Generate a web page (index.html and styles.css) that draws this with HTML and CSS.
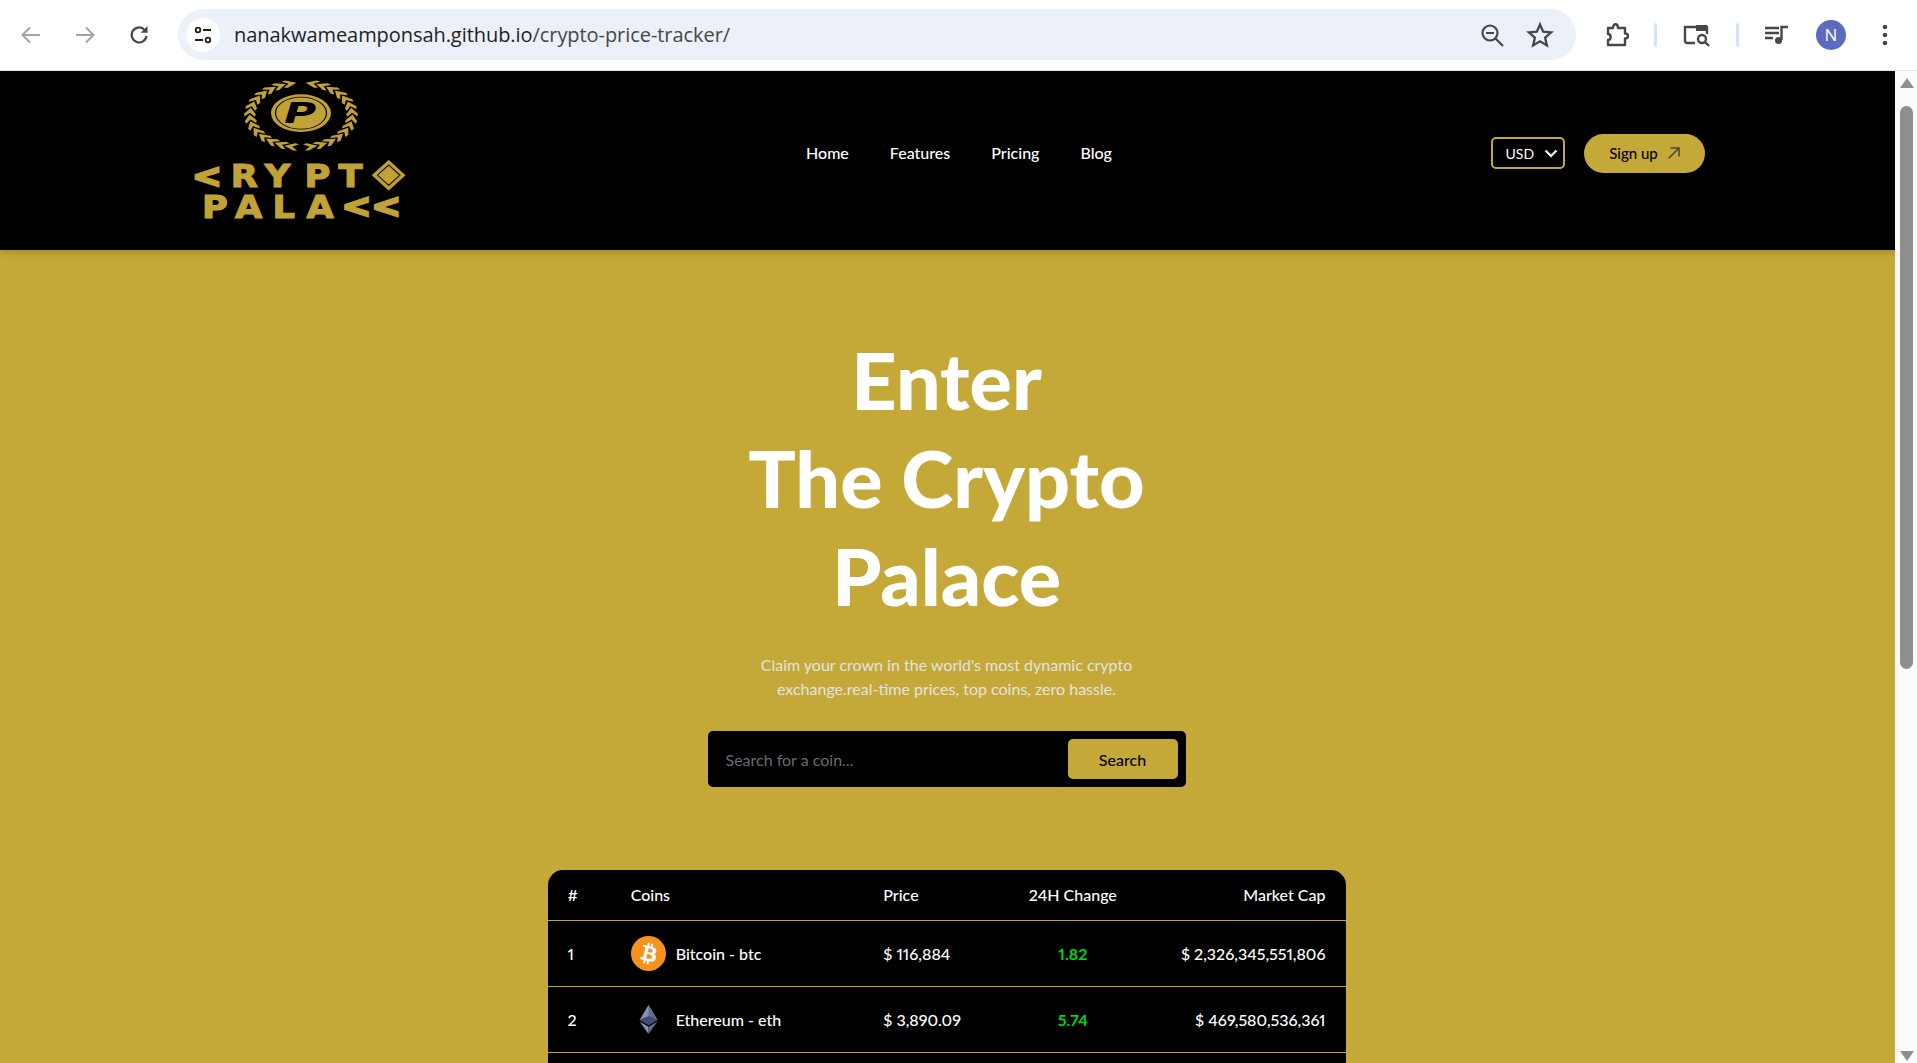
FILE: index.html
```html
<!DOCTYPE html>
<html lang="en">
<head>
<meta charset="UTF-8" />
<meta name="viewport" content="width=device-width, initial-scale=1" />
<title>Crypto Palace</title>
<link rel="stylesheet" href="styles.css">
</head>
<body>

<!-- browser toolbar -->
<header class="toolbar">
  <div class="tool-btn">
    <svg width="24" height="24" viewBox="0 0 24 24" fill="none" stroke="#a3a3a3" stroke-width="2"><path d="M21 12H4M11 4.500 3.500 12l7.500 7.500"/></svg>
  </div>
  <div class="tool-btn">
    <svg width="24" height="24" viewBox="0 0 24 24" fill="none" stroke="#a3a3a3" stroke-width="2"><path d="M3 12h17M13 4.500l7.500 7.500-7.500 7.500"/></svg>
  </div>
  <div class="tool-btn">
    <svg width="24" height="24" viewBox="0 0 24 24" fill="none" stroke="#474747" stroke-width="2.200"><path d="M19.500 13a7.500 7.500 0 1 1-2.300-6.500L20 9"/><path d="M20.500 3v6.800h-6.800" stroke="none" fill="#474747"/></svg>
  </div>

  <div class="address-bar">
    <span class="site-icon">
      <svg width="20" height="20" viewBox="0 0 20 20" fill="none" stroke="#1f1f1f" stroke-width="1.800"><circle cx="5" cy="5" r="2.300"/><path d="M10 5h8M2 15h8"/><circle cx="15" cy="15" r="2.300"/></svg>
    </span>
    <span class="url"><span class="url-host">nanakwameamponsah.github.io</span>/crypto-price-tracker/</span>
    <svg class="bar-icon" width="28" height="28" viewBox="0 0 28 28" fill="none" stroke="#474747" stroke-width="2.200"><circle cx="12" cy="12" r="7.500"/><path d="M8 12h8M17.500 17.500l7.500 7.500"/></svg>
    <svg class="bar-icon" width="28" height="28" viewBox="0 0 24 24" fill="none" stroke="#474747" stroke-width="2"><path d="m12 3 2.700 6.200 6.800.600-5.100 4.500 1.500 6.600L12 17.400l-5.900 3.500 1.500-6.600-5.100-4.500 6.800-.600z"/></svg>
  </div>

  <div class="tool-box w40">
    <svg width="26" height="26" viewBox="0 0 26 26" fill="none" stroke="#474747" stroke-width="2.400"><path d="M4 6h5c0-5 5-5 5 0h7v5.500c4 0 4 5 0 5V23H4v-5c3.500 0 3.500-6 0-6z" stroke-linejoin="round"/></svg>
  </div>
  <div class="tool-box w36"><span class="tool-sep"></span></div>
  <div class="tool-box w48">
    <svg width="28" height="26" viewBox="0 0 28 26" fill="none" stroke="#474747" stroke-width="2.400"><path d="M12 21H4a2 2 0 0 1-2-2V5h22v7"/><path d="M13 3h11v6H13z" fill="#474747" stroke="none"/><circle cx="19" cy="17" r="4"/><path d="m22 20 4 4"/></svg>
  </div>
  <div class="tool-box w32"><span class="tool-sep"></span></div>
  <div class="tool-box w48">
    <svg width="26" height="24" viewBox="0 0 26 24" fill="none" stroke="#474747" stroke-width="2.400"><path d="M1 5h14M1 10h14M1 15h8"/><path d="M17.500 17V4H24"/><circle cx="14.500" cy="17.500" r="3.500" fill="#474747" stroke="none"/></svg>
  </div>
  <div class="tool-box w60"><span class="avatar">N</span></div>
  <div class="tool-box w48">
    <svg width="8" height="24" viewBox="0 0 8 24" fill="#474747"><circle cx="4" cy="4" r="2.300"/><circle cx="4" cy="12" r="2.300"/><circle cx="4" cy="20" r="2.300"/></svg>
  </div>
</header>

<div class="viewport">
  <main class="page">

    <nav class="navbar">
      <a class="logo" href="#" aria-label="Crypto Palace">
        <svg width="225" height="150" viewBox="0 0 225 150">
          <defs>
            <path id="leaf" d="M-7-51 3-57l4 1-6 5 6 5-4 1z"/>
            <g id="branch">
              <use href="#leaf" transform="rotate(13)"/>
              <use href="#leaf" transform="rotate(25)"/>
              <use href="#leaf" transform="rotate(37)"/>
              <use href="#leaf" transform="rotate(49)"/>
              <use href="#leaf" transform="rotate(61)"/>
              <use href="#leaf" transform="rotate(73)"/>
              <use href="#leaf" transform="rotate(85)"/>
              <use href="#leaf" transform="rotate(97)"/>
              <use href="#leaf" transform="rotate(109)"/>
              <use href="#leaf" transform="rotate(121)"/>
              <use href="#leaf" transform="rotate(133)"/>
              <use href="#leaf" transform="rotate(145)"/>
              <use href="#leaf" transform="rotate(157)"/>
              <use href="#leaf" transform="rotate(169)"/>
            </g>
          </defs>
          <g fill="#c0a236" transform="translate(111 40) scale(1 .63)">
            <use href="#branch"/>
            <use href="#branch" transform="scale(-1 1)"/>
            <g transform="translate(0 -3)">
              <circle r="30"/>
              <circle r="25.500" fill="none" stroke="#000" stroke-width="1.200"/>
              <text class="logo-coin" x="-1" y="16" text-anchor="middle">P</text>
            </g>
          </g>
          <text class="logo-word" transform="scale(1.1 1)" y="112"><tspan class="logo-chev" x="2">&lt;</tspan><tspan x="37 68 104 135">RYPT</tspan><tspan class="logo-dia" x="166" dy="-2">◈</tspan></text>
          <text class="logo-word" transform="scale(1.1 1)" y="143"><tspan x="11 41 75 106">PALA</tspan><tspan class="logo-chev" x="138 165" dy="-1">&lt;&lt;</tspan></text>
        </svg>
      </a>

      <ul class="nav-links">
        <li>Home</li>
        <li>Features</li>
        <li>Pricing</li>
        <li>Blog</li>
      </ul>

      <div class="nav-right">
        <div class="currency">
          USD
          <svg width="14" height="9" viewBox="0 0 14 9" fill="none" stroke="#fff" stroke-width="2.200"><path d="m1.500 1.500 5.500 5.500 5.500-5.500"/></svg>
        </div>
        <button class="signup">
          Sign up
          <svg width="14" height="14" viewBox="0 0 14 14" fill="none" stroke="#4a4a3a" stroke-width="1.600"><path d="M1.500 12.500 12 2M3.500 2H12v8.500"/></svg>
        </button>
      </div>
    </nav>

    <div class="content">
      <section class="hero">
        <h1>Enter<br>The Crypto<br>Palace</h1>
        <p>Claim your crown in the world's most dynamic crypto<br>exchange.real-time prices, top coins, zero hassle.</p>
        <form class="search-form">
          <input type="text" placeholder="Search for a coin...">
          <button type="button">Search</button>
        </form>
      </section>

      <section class="crypto-table">
        <div class="table-row head">
          <span>#</span>
          <span>Coins</span>
          <span>Price</span>
          <span class="center">24H Change</span>
          <span class="right">Market Cap</span>
        </div>
        <div class="table-row">
          <span>1</span>
          <span class="coin">
            <svg width="35" height="35" viewBox="0 0 32 32"><circle cx="16" cy="16" r="16" fill="#f7931a"/><path fill="#fff" d="M23.189 14.020c.314-2.096-1.283-3.223-3.465-3.975l.708-2.840-1.728-.430-.690 2.765c-.454-.114-.920-.220-1.385-.326l.695-2.783L15.596 6l-.708 2.839c-.376-.086-.746-.170-1.104-.260l.002-.009-2.384-.595-.460 1.846s1.283.294 1.256.312c.700.175.826.638.805 1.006l-.806 3.235c.048.012.110.030.180.057l-.183-.045-1.130 4.532c-.086.212-.303.531-.793.410.018.025-1.256-.313-1.256-.313l-.858 1.978 2.250.561c.418.105.828.215 1.231.318l-.715 2.872 1.727.430.708-2.840c.472.127.930.245 1.378.357l-.706 2.828 1.728.430.715-2.866c2.948.558 5.164.333 6.097-2.333.752-2.146-.037-3.385-1.588-4.192 1.130-.260 1.980-1.003 2.207-2.538zm-3.950 5.538c-.533 2.147-4.148.986-5.320.695l.950-3.805c1.172.293 4.929.872 4.370 3.110zm.535-5.569c-.487 1.953-3.495.960-4.470.717l.860-3.450c.975.243 4.118.696 3.610 2.733z"/></svg>
            Bitcoin - btc
          </span>
          <span>$ 116,884</span>
          <span class="center green">1.82</span>
          <span class="right">$ 2,326,345,551,806</span>
        </div>
        <div class="table-row">
          <span>2</span>
          <span class="coin">
            <svg width="35" height="35" viewBox="0 0 35 35">
              <path fill="#8a92b2" d="M17.500 3 8.600 17.800l8.900 5.300 8.900-5.300z"/>
              <path fill="#62688f" d="M17.500 3v20.100l8.900-5.300z"/>
              <path fill="#454a75" d="M17.500 14 8.600 17.800l8.900 5.300 8.900-5.300z"/>
              <path fill="#8a92b2" d="m8.600 19.500 8.900 12.500v-7.200z"/>
              <path fill="#62688f" d="m26.400 19.500-8.900 12.500v-7.200z"/>
            </svg>
            Ethereum - eth
          </span>
          <span>$ 3,890.09</span>
          <span class="center green">5.74</span>
          <span class="right">$ 469,580,536,361</span>
        </div>
      </section>
    </div>

  </main>

  <!-- window scrollbar -->
  <aside class="scrollbar">
    <span class="arrow-up"></span>
    <span class="thumb"></span>
    <span class="arrow-down"></span>
  </aside>
</div>

</body>
</html>
```

FILE: styles.css
```css
* {
  box-sizing: border-box;
}
html, body {
  margin: 0;
  height: 100%;
  overflow: hidden;
}
body {
  font-family: 'Lato', sans-serif;
  background: #fff;
  display: flex;
  flex-direction: column;
}

/* browser toolbar */
.toolbar {
  height: 71px;
  flex: none;
  display: flex;
  align-items: center;
  padding: 0 8px 1px 4px;
  background: #fff;
  border-bottom: 1px solid #e3e3e3;
}
.tool-btn {
  width: 54px;
  display: flex;
  justify-content: center;
}
.address-bar {
  width: 1398px;
  height: 51px;
  margin-left: 12px;
  margin-right: 21px;
  padding: 0 22px 0 8px;
  background: #ebf0f9;
  border-radius: 26px;
  display: flex;
  align-items: center;
}
.site-icon {
  width: 34px;
  height: 34px;
  border-radius: 50%;
  background: #fff;
  display: flex;
  align-items: center;
  justify-content: center;
  margin-right: 14px;
}
.url {
  flex: 1;
  font-family: 'Open Sans', sans-serif;
  font-size: 20px;
  letter-spacing: -0.06px;
  color: #474747;
}
.url-host {
  color: #1f1f1f;
}
.bar-icon {
  margin-left: 20px;
}
.tool-box {
  display: flex;
  align-items: center;
  justify-content: center;
}
.w32 { width: 32px; }
.w36 { width: 36px; }
.w40 { width: 40px; }
.w48 { width: 48px; }
.w60 { width: 60px; }
.tool-sep {
  width: 3px;
  height: 24px;
  background: #d3e3fd;
  border-radius: 2px;
}
.avatar {
  width: 30px;
  height: 30px;
  border-radius: 50%;
  background: #5c6bc0;
  color: #fff;
  font-family: 'Open Sans', sans-serif;
  font-size: 17px;
  display: flex;
  align-items: center;
  justify-content: center;
}

/* page area */
.viewport {
  flex: 1;
  display: flex;
  min-height: 0;
}
.page {
  flex: 1;
  min-width: 0;
  overflow: hidden;
  background: #c4a938;
  color: #fff;
}
.content {
  padding-right: 2px;
}
.scrollbar {
  width: 22px;
  flex: none;
  background: #fbfbfb;
  position: relative;
}
.thumb {
  position: absolute;
  top: 35px;
  left: 5px;
  width: 13px;
  height: 563px;
  background: #8f8f8f;
  border-radius: 7px;
}
.arrow-up, .arrow-down {
  position: absolute;
  left: 5px;
  width: 0;
  height: 0;
  border-left: 7px solid transparent;
  border-right: 7px solid transparent;
}
.arrow-up {
  top: 7px;
  border-bottom: 10px solid #8f8f8f;
}
.arrow-down {
  bottom: 2px;
  border-top: 10px solid #8f8f8f;
}

/* navbar */
.navbar {
  height: 179px;
  padding: 0 10%;
  background: #000;
  display: flex;
  align-items: center;
  justify-content: space-between;
  box-shadow: 0 3px 6px rgba(0, 0, 0, 0.15);
}
.logo {
  width: 237px;
  display: block;
  align-self: flex-start;
  margin-top: 4px;
}
.logo svg {
  display: block;
}
.logo-coin {
  font-family: 'DejaVu Sans', sans-serif;
  font-weight: 700;
  font-style: italic;
  font-size: 44px;
  fill: #000;
}
.logo-word {
  font-family: 'DejaVu Sans', sans-serif;
  font-weight: 700;
  font-size: 32px;
  fill: #c0a236;
  stroke: #c0a236;
  stroke-width: 1.200;
}
.logo-chev {
  font-size: 32px;
  stroke-width: 2.500;
}
.logo-dia {
  font-size: 38px;
  stroke-width: 1;
}
.nav-links {
  display: flex;
  gap: 41px;
  list-style: none;
  margin: -16px 0 0;
  padding: 0;
  font-size: 16px;
  font-weight: 500;
}
.nav-right {
  display: flex;
  align-items: center;
  gap: 19px;
  margin-top: -15px;
}
.currency {
  width: 74px;
  height: 32px;
  border: 2px solid #c4a938;
  border-radius: 5px;
  display: flex;
  align-items: center;
  justify-content: space-between;
  padding: 0 5px 0 12px;
  font-size: 14px;
}
.signup {
  width: 121px;
  height: 39px;
  border: none;
  border-radius: 20px;
  background: #c4a938;
  color: #000;
  font-family: inherit;
  font-size: 15px;
  font-weight: 500;
  display: flex;
  align-items: center;
  justify-content: center;
  gap: 9px;
}

/* hero */
.hero {
  padding-top: 81px;
  display: flex;
  flex-direction: column;
  align-items: center;
  text-align: center;
}
.hero h1 {
  margin: 0;
  font-size: 79px;
  font-weight: 900;
  line-height: 98px;
}
.hero p {
  margin: 28px 0 0;
  font-size: 16px;
  line-height: 24px;
  color: #e3e3e3;
}
.search-form {
  width: 478px;
  height: 56px;
  margin-top: 30px;
  padding: 8px;
  background: #000;
  border-radius: 5px;
  display: flex;
  align-items: center;
  justify-content: space-between;
}
.search-form input {
  flex: 1;
  background: none;
  border: none;
  outline: none;
  padding-left: 10px;
  font-family: inherit;
  font-size: 16px;
  color: #fff;
}
.search-form input::placeholder {
  color: #6b6b73;
}
.search-form button {
  width: 110px;
  height: 40px;
  border: none;
  border-radius: 5px;
  background: #c4a938;
  color: #000;
  font-family: inherit;
  font-size: 16px;
  font-weight: 500;
}

/* coin table */
.crypto-table {
  width: 798px;
  margin: 83px auto 0;
  padding-bottom: 80px;
  background: #000;
  border-radius: 15px;
}
.table-row {
  height: 66px;
  padding: 0 20px;
  display: grid;
  grid-template-columns: 0.5fr 2fr 1fr 1fr 1.5fr;
  align-items: center;
  border-bottom: 1px solid #c4a938;
  font-size: 16px;
  font-weight: 500;
  font-feature-settings: "pnum";
}
.table-row.head {
  height: 51px;
  padding-bottom: 2px;
}
.center {
  text-align: center;
}
.right {
  text-align: right;
}
.green {
  color: #00d515;
  font-weight: 700;
}
.coin {
  display: flex;
  align-items: center;
  gap: 10px;
}
```
